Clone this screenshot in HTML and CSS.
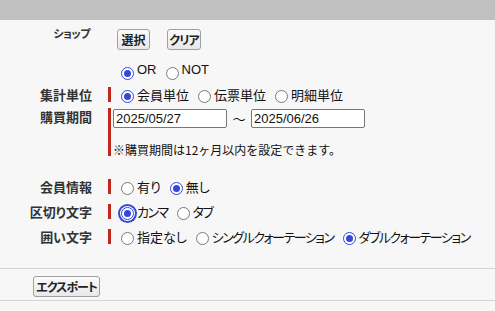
FILE: index.html
```html
<!DOCTYPE html>
<html lang="ja">
<head>
<meta charset="utf-8">
<link rel="stylesheet" href="styles.css">
</head>
<body>
<div class="topbar"></div>
<div class="form">
  <div class="row row-shop">
    <div class="label label-top">ショップ</div>
    <div class="field field-shop">
      <button class="btn btn-sel">選択</button>
      <button class="btn btn-clr">クリア</button>
    </div>
  </div>
  <div class="row row-small">
    <div class="label"></div>
    <div class="field nobar">
      <label class="opt"><span class="radio checked"></span><span class="txt latin">OR</span></label>
      <label class="opt"><span class="radio"></span><span class="txt latin">NOT</span></label>
    </div>
  </div>
  <div class="row">
    <div class="label">集計単位</div>
    <div class="field"><span class="bar"></span>
      <label class="opt"><span class="radio checked"></span><span class="txt">会員単位</span></label>
      <label class="opt"><span class="radio"></span><span class="txt">伝票単位</span></label>
      <label class="opt"><span class="radio"></span><span class="txt">明細単位</span></label>
    </div>
  </div>
  <div class="row row-period">
    <div class="label label-top2">購買期間</div>
    <div class="field field-period"><span class="bar bar-tall"></span>
      <div class="period-body">
        <div class="dates">
          <input class="date" type="text" value="2025/05/27">
          <span class="tilde">〜</span>
          <input class="date" type="text" value="2025/06/26">
        </div>
        <div class="note">※購買期間は12ヶ月以内を設定できます。</div>
      </div>
    </div>
  </div>
  <div class="row row-member">
    <div class="label">会員情報</div>
    <div class="field"><span class="bar"></span>
      <label class="opt"><span class="radio"></span><span class="txt">有り</span></label>
      <label class="opt"><span class="radio checked"></span><span class="txt">無し</span></label>
    </div>
  </div>
  <div class="row">
    <div class="label">区切り文字</div>
    <div class="field"><span class="bar"></span>
      <label class="opt"><span class="radio checked focus"></span><span class="txt k">カンマ</span></label>
      <label class="opt"><span class="radio"></span><span class="txt k">タブ</span></label>
    </div>
  </div>
  <div class="row">
    <div class="label">囲い文字</div>
    <div class="field"><span class="bar"></span>
      <label class="opt"><span class="radio"></span><span class="txt">指定なし</span></label>
      <label class="opt"><span class="radio"></span><span class="txt k">シングルクォーテーション</span></label>
      <label class="opt"><span class="radio checked"></span><span class="txt k">ダブルクォーテーション</span></label>
    </div>
  </div>
</div>
<div class="footer">
  <button class="btn btn-export">エクスポート</button>
</div>
</body>
</html>
```
FILE: styles.css
```css
html, body {
  margin: 0;
  padding: 0;
}
body {
  background: #f7f7f7;
  font-family: "Noto Sans CJK JP", sans-serif;
  font-size: 13px;
  color: #111;
  width: 495px;
  height: 311px;
  overflow: hidden;
  font-feature-settings: "palt";
}
.topbar {
  height: 20px;
  background: #c0c0c0;
}
.form {
  padding-top: 4px;
  height: 244px;
}
.row {
  display: flex;
  align-items: center;
  height: 25px;
}
.row-shop {
  height: 30px;
  align-items: flex-start;
  margin-bottom: 8px;
}
.row-small {
  height: 20px;
}
.label {
  width: 92px;
  flex: none;
  text-align: right;
  font-weight: bold;
  color: #333;
  font-size: 13px;
  line-height: 16px;
  margin-right: 16px;
}
.label-top {
  font-size: 11px;
  margin-top: 1px;
  padding-right: 2px;
  letter-spacing: -0.5px;
  box-sizing: border-box;
}
.field {
  display: flex;
  align-items: center;
  height: 100%;
}
.bar {
  width: 3px;
  height: 15px;
  background: #c0281c;
  margin-right: 10px;
  flex: none;
}
.nobar {
  padding-left: 13px;
}
.field-shop {
  padding-left: 9px;
  padding-top: 5px;
  gap: 17px;
  align-items: flex-start;
}
.btn {
  font-family: "Noto Sans CJK JP", sans-serif;
  font-feature-settings: "palt";
  font-weight: bold;
  font-size: 12px;
  color: #222;
  height: 21px;
  padding: 0;
  line-height: 19px;
  border: 1px solid #a0a0a0;
  border-radius: 3px;
  background: linear-gradient(#fbfbfb, #e8e8e8);
  margin: 0;
  text-align: center;
}
.btn-sel {
  width: 33px;
}
.btn-clr {
  width: 34px;
  letter-spacing: -1px;
}
.btn-export {
  width: 67px;
  letter-spacing: -1px;
}
.opt {
  display: flex;
  align-items: center;
  margin-right: 9px;
}
.radio {
  width: 13px;
  height: 13px;
  border: 1px solid #7a7a7a;
  border-radius: 50%;
  background: #fff;
  box-sizing: border-box;
  position: relative;
  flex: none;
  margin-top: 3px;
}
.radio.checked {
  border: 1px solid #3447d9;
}
.radio.checked::after {
  content: "";
  position: absolute;
  left: 2px;
  top: 2px;
  width: 7px;
  height: 7px;
  border-radius: 50%;
  background: #3447d9;
}
.radio.focus {
  box-shadow: 0 0 0 1px #fff, 0 0 0 3px #3447d9;
}
.txt {
  margin-left: 3px;
  line-height: 16px;
  white-space: nowrap;
}
.k {
  letter-spacing: -1.5px;
}
.latin {
  font-family: "Liberation Sans", sans-serif;
  font-size: 13px;
  margin-top: -4px;
}
.row-period {
  height: 52px;
  align-items: flex-start;
  margin-top: 1px;
}
.label-top2 {
  margin-top: 1px;
}
.field-period {
  align-items: flex-start;
}
.bar-tall {
  height: 48px;
  margin-top: 0;
  margin-right: 2px;
}
.period-body {
  padding-top: 1px;
}
.dates {
  display: flex;
  align-items: center;
}
.date {
  width: 114px;
  height: 19px;
  box-sizing: border-box;
  border: 1px solid #777;
  border-radius: 2px;
  background: #fff;
  font-family: "Liberation Sans", sans-serif;
  font-size: 13px;
  padding: 0 2px;
  margin: 0;
  color: #111;
}
.tilde {
  width: 24px;
  text-align: center;
}
.note {
  margin-top: 15px;
  font-size: 12px;
  line-height: 14px;
  white-space: nowrap;
  font-feature-settings: normal;
}
.row-member {
  margin-top: 14px;
}
.footer {
  border-top: 1px solid #d4d4d4;
  border-bottom: 1px solid #d4d4d4;
  height: 33px;
  padding-left: 33px;
  padding-top: 7px;
  box-sizing: border-box;
}
```
